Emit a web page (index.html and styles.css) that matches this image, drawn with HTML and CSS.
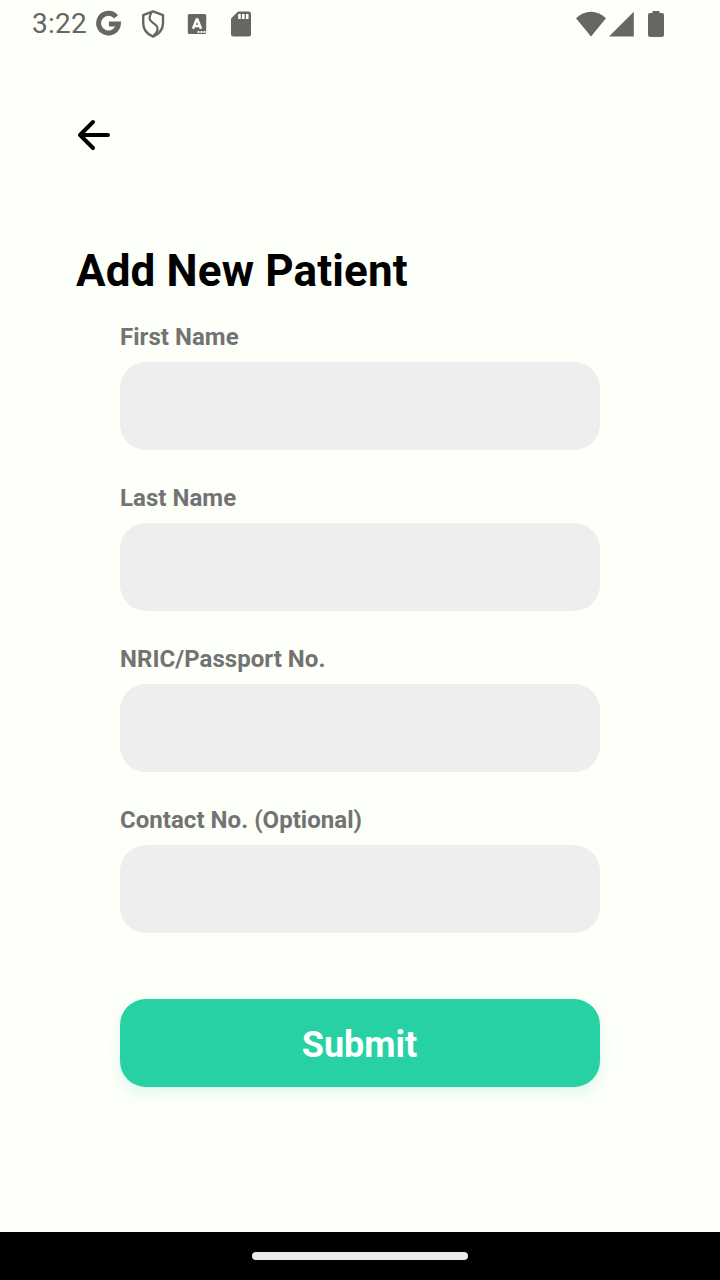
FILE: index.html
```html
<!DOCTYPE html>
<html lang="en">
<head>
<meta charset="utf-8">
<title>Add New Patient</title>
<link rel="stylesheet" href="styles.css">
</head>
<body>
<div class="screen">
  <header class="status-bar">
    <span class="clock">3:22</span>
    <div class="notifications">
      <svg class="icon" width="28" height="28" viewBox="0 0 28 28"><path d="M21.100 6.800A9.900 9.900 0 1 0 23.400 13.900H13.900" fill="none" stroke="currentColor" stroke-width="5"/></svg>
      <svg class="icon" width="28" height="28" viewBox="0 0 28 28"><path d="M14 1.400 24 5.200V13C24 20.500 19.500 24.300 14 26.700 8.500 24.300 4.200 20.500 4.200 13V5.200Z" fill="none" stroke="currentColor" stroke-width="2.400" stroke-linejoin="round"/><path d="M12.600 2.500Q9.600 7 11.200 10.200C12.200 12.600 16.500 13.600 18 16.500C19.500 19.500 17 23.500 14.400 25.800" fill="none" stroke="currentColor" stroke-width="2.200"/></svg>
      <svg class="icon" width="28" height="28" viewBox="0 0 28 28"><rect x="4.800" y="4" width="18.400" height="20" rx="1.600" fill="currentColor"/><path d="M10 18.800 13.600 9.500H14.400L18 18.800M11.300 16H16.700" fill="none" stroke="#fdfff9" stroke-width="2.500"/><path d="M14.500 21H16.500V23H14.500ZM17.500 21H19.500V23H17.500ZM20.500 21H22.500V23H20.500Z" fill="#fdfff9"/></svg>
      <svg class="icon" width="28" height="28" viewBox="0 0 28 28"><path d="M11 1.400H21.600Q24 1.400 24 3.800V24.200Q24 26.600 21.600 26.600H6.400Q4 26.600 4 24.200V8.400Z" fill="currentColor"/><path d="M11.200 4H13.800V9H11.200ZM15 4H17.600V9H15ZM18.900 4H21.500V9H18.900Z" fill="#fdfff9"/></svg>
    </div>
    <div class="system-icons">
      <svg class="icon" width="90" height="28" viewBox="0 0 90 28"><path d="M15 26.500 0 8.300C8.500-.6 21.500-.6 30 8.300Z" fill="currentColor"/><path d="M33 26.500 57.800 1.700V26.500Z" fill="currentColor"/><path d="M76.500 1H83.500V3H86Q88 3 88 5V25Q88 27 86 27H74Q72 27 72 25V5Q72 3 74 3H76.500Z" fill="currentColor"/></svg>
    </div>
  </header>
  <main class="content">
    <a class="back" href="#" aria-label="Back"><svg class="icon" width="36" height="36" viewBox="0 0 36 36"><path d="M32 18H4.500M17 5 4 18 17 31" fill="none" stroke="currentColor" stroke-width="4" stroke-linecap="round" stroke-linejoin="round"/></svg></a>
    <h1 class="title">Add New Patient</h1>
    <form class="form">
      <label class="field"><span class="label">First Name</span><input class="input" type="text"></label>
      <label class="field"><span class="label">Last Name</span><input class="input" type="text"></label>
      <label class="field"><span class="label">NRIC/Passport No.</span><input class="input" type="text"></label>
      <label class="field"><span class="label">Contact No. (Optional)</span><input class="input" type="text"></label>
      <button class="submit" type="button">Submit</button>
    </form>
  </main>
  <footer class="nav-bar"><div class="handle"></div></footer>
</div>
</body>
</html>
```
FILE: styles.css
```css
* { box-sizing: border-box; }
body { margin: 0; background: #fdfff9; font-family: Roboto, sans-serif; }
.screen { display: flex; flex-direction: column; width: 720px; height: 1280px; background: #fdfff9; }
.icon { display: block; }
.status-bar { display: flex; align-items: center; height: 48px; padding: 0 54px 0 32px; color: #666664; }
.clock { width: 63px; font-size: 28px; line-height: 32px; letter-spacing: 0.25px; }
.notifications { display: flex; gap: 16px; }
.system-icons { margin-left: auto; }
.content { flex: 1; padding: 69px 76px 0; }
.back { display: block; width: 36px; color: #000; }
.title { margin: 92px 0 26px; font-size: 44px; line-height: 52px; font-weight: 700; letter-spacing: 0.14px; color: #000; }
.form { display: flex; flex-direction: column; gap: 34px; padding: 0 44px; }
.field { display: flex; flex-direction: column; gap: 11px; }
.label { font-size: 24px; line-height: 28px; font-weight: 700; letter-spacing: 0.04px; color: #737373; }
.input { width: 100%; height: 88px; padding: 0 24px; border: 0; border-radius: 26px; background: #eee; font: inherit; font-size: 28px; }
.submit { height: 88px; margin-top: 32px; padding: 3px 1px 0 0; border: 0; border-radius: 26px; background: #28d1a4; color: #fff; font: 700 36px/42px Roboto, sans-serif; box-shadow: 0 6px 14px rgba(40, 209, 164, 0.15); }
.nav-bar { display: flex; align-items: center; justify-content: center; height: 48px; background: #000; }
.handle { width: 216px; height: 8px; border-radius: 4px; background: #ebebeb; }
```
